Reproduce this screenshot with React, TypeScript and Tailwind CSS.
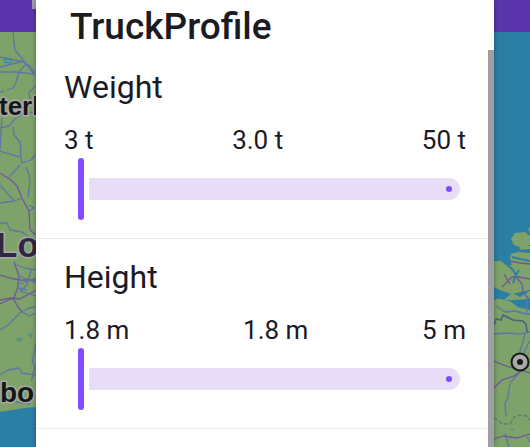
import { useState } from "react";

function Road({ d, trunk = false, width = 1.3 }: { d: string; trunk?: boolean; width?: number }) {
  return <path d={d} fill="none" stroke={trunk ? "#70579a" : "#5e76a4"} strokeWidth={width} strokeLinejoin="round" />;
}

function WestMap() {
  return (
    <svg className="w-9 shrink-0" height="415" viewBox="0 32 36 415" aria-hidden="true">
      <rect y="32" width="36" height="415" fill="#7ea26a" />
      <path d="M0 412 L12 410 L25 408 L36 407 V447 H0Z" fill="#2b7fa4" />
      <path d="M3 60 l5 -1 4 2 -2 2 -6 -1" fill="none" stroke="#3193a8" strokeWidth="1.4" />
      <path d="M16 338 l7 -1 -2 5 -4 -1Z M27 333 l6 1 -2 5Z" fill="#559681" />
      <Road d="M13 32 L14 43 15 50 20 56 26 64 31 70 35 76" />
      <Road d="M0 57 L10 59 24 62 31 67 35 74 M0 72 L15 72 34 74 M0 67 L24 61" />
      <Road d="M26 64 L19 72 16 82 13 88 7 90 M0 92 L4 91 M36 86 L29 92 30 99 35 103" />
      <Road d="M0 128 L9 126 16 118 24 113 36 112 M2 118 L1 132 0 150 M13 127 L14 135 20 142 21 150" />
      <Road d="M0 151 L9 154 20 157 M20 150 L22 163 31 160 36 154 M20 165 L9 177 M0 185 L14 201 0 203 M14 201 L22 198" />
      <Road d="M26 167 L29 174 30 182 28 197 M29 205 L34 208 29 211" />
      <Road d="M0 173 L11 180 17 186 22 198 29 211 30 230 36 235" trunk />
      <Road d="M0 223 L7 223 10 230 22 232 28 236 36 239" />
      <Road d="M0 275 L10 278 19 280 36 280 M14 262 L19 276 18 287 13 300 M36 290 L20 299 12 298 0 300" trunk />
      <Road d="M14 264 L25 268 36 270 M20 276 L36 283 M31 270 L27 285 20 291 36 296 M18 277 L18 288 27 290 M20 284 L36 278" />
      <Road d="M0 330 L8 325 20 313 29 308 36 307 M22 312 L29 316 36 313" />
      <Road d="M0 304 L13 298 18 307 22 312" trunk />
      <Road d="M36 343 L34 354 32 360 35 367 33 374 M0 375 L8 370 19 368 22 373 36 375 M33 375 L31 381 M15 402 L30 404" />
      <g
        fontFamily="'Liberation Sans', Arial, sans-serif"
        fontWeight="700"
        stroke="#a9aaa6"
        strokeWidth="3"
        paintOrder="stroke"
        strokeLinejoin="round"
      >
        <text x="-1" y="115" fontSize="26" fill="#151618">terb</text>
        <text x="-4" y="257" fontSize="35" fill="#2f2840">Lo</text>
        <text x="0" y="402" fontSize="28" fill="#151618">bo</text>
      </g>
    </svg>
  );
}

function EastMap() {
  return (
    <svg className="w-9 shrink-0" height="415" viewBox="494 32 36 415" aria-hidden="true">
      <rect x="494" y="32" width="36" height="415" fill="#2b7fa4" />
      <path d="M511 239 L515 233 525 232 530 236 V245 L520 247 514 245Z" fill="#7ea26a" />
      <path d="M494 261 L501 261 506 265 512 265 510 259 511 254 518 252 530 253 V447 H494 V300 L502 297 494 293Z" fill="#7ea26a" />
      <path d="M519 248 l5 -3 6 1 v3 l-9 1Z M528 229 l2 -2 v6Z" fill="#7ea26a" />
      <path d="M507 264 L513 270 516 275 L519 270 M512 257 L520 259 530 261 M516 275 L513 283" fill="none" stroke="#2b7fa4" strokeWidth="2" />
      <path d="M494 287 L502 291 512 294 530 290 V310 L518 307 510 301 494 298Z" fill="#2b7fa4" />
      <path d="M504 300 L512 293 520 297 530 291 V299 L514 300Z" fill="#7ea26a" />
      <Road d="M502 287 L512 277 519 277 530 279 M504 274 L510 284 M517 278 L522 284 523 292 529 299 M510 261 L520 263 530 264" trunk />
      <Road d="M496 306 L505 312 515 311 526 314 530 314 M527 297 L527 314 M494 334 L507 333 520 334 530 332" />
      <path d="M494 325 L496 319 501 320 503 315 513 320 523 321 526 324 527 332" fill="none" stroke="#46657a" strokeWidth="1.6" />
      <Road d="M525 334 L521 348 517 362 M530 340 L524 353 519 373 510 383 508 397 505 404 506 416 M505 433 L509 447" />
      <Road d="M494 361 L506 366 530 373 M494 388 L502 380 514 376 524 369 M494 439 L503 436 516 438 530 434" trunk />
      <Road d="M527 437 L530 442" />
      <path d="M494 418 L499 421 502 424 510 424 514 417 520 415 527 416 530 420" fill="none" stroke="#5d7a78" strokeWidth="1.3" strokeDasharray="4 2" />
      <path d="M510 429 l4 -1 -1 3Z" fill="#559681" />
      <circle cx="520" cy="362" r="8.5" fill="#aaa" stroke="#18191a" strokeWidth="2" />
      <circle cx="520" cy="362" r="3" fill="#18191a" />
    </svg>
  );
}

type RangeProps = { id: string; title: string; unit: string; min: number; max: number };

function RangeSetting({ id, title, unit, min, max }: RangeProps) {
  const [value, setValue] = useState(min);
  const share = (value - min) / (max - min);

  return (
    <section className="border-b border-[#ececee] px-7 pt-4 pb-[18px]">
      <label htmlFor={id} className="block text-[32px] leading-[44px]">
        {title}
      </label>
      <div className="mt-[13px] flex justify-between text-[26px] leading-[36px]">
        <span>{min} {unit}</span>
        <output htmlFor={id}>{value.toFixed(1)} {unit}</output>
        <span>{max} {unit}</span>
      </div>
      <div className="mr-1.5 ml-3.5 grid h-[62px] items-center">
        <div
          className="h-[22px] rounded-l-full bg-[#834bff] [grid-area:1/1]"
          style={{ width: `calc(${share} * (100% - 6px) - 5px)` }}
        />
        <div
          className="flex h-[22px] items-center justify-end overflow-hidden rounded-l-[2px] rounded-r-full bg-[#e7ddf6] pr-2 [grid-area:1/1]"
          style={{ marginLeft: `calc(${share} * (100% - 6px) + 11px)` }}
        >
          <span className="size-1.5 rounded-full bg-[#834bff]" />
        </div>
        <input
          id={id}
          type="range"
          min={min}
          max={max}
          step={0.1}
          value={value}
          onChange={(event) => setValue(Number(event.target.value))}
          className="m-0 h-[62px] w-full appearance-none bg-transparent [grid-area:1/1] [&::-webkit-slider-thumb]:h-[62px] [&::-webkit-slider-thumb]:w-1.5 [&::-webkit-slider-thumb]:appearance-none [&::-webkit-slider-thumb]:rounded-full [&::-webkit-slider-thumb]:bg-[#834bff]"
        />
      </div>
    </section>
  );
}

export default function App() {
  return (
    <div className="relative h-screen overflow-hidden font-[Roboto,sans-serif] text-[#1b1a26]">
      <div className="absolute inset-0 flex flex-col">
        <div className="h-8 shrink-0 bg-[#5a35ab]">
          <div className="ml-8 h-[9px] w-4 bg-[#a29fa8]" />
        </div>
        <div className="flex grow justify-between bg-[#2b7fa4]">
          <WestMap />
          <EastMap />
        </div>
      </div>
      <main className="relative mx-9 flex h-full bg-white shadow-[0_0_5px_rgba(0,0,0,0.35)]">
        <div className="min-w-0 grow">
          <h1 className="pt-[5px] pl-[34px] text-[37px] leading-[44px] font-medium text-[#1c1b1f]">TruckProfile</h1>
          <div className="-mr-1.5">
            <RangeSetting id="weight" title="Weight" unit="t" min={3} max={50} />
            <RangeSetting id="height" title="Height" unit="m" min={1.8} max={5} />
          </div>
        </div>
        <div className="relative mt-[50px] w-1.5 shrink-0 bg-[#a09da3]" />
      </main>
    </div>
  );
}
